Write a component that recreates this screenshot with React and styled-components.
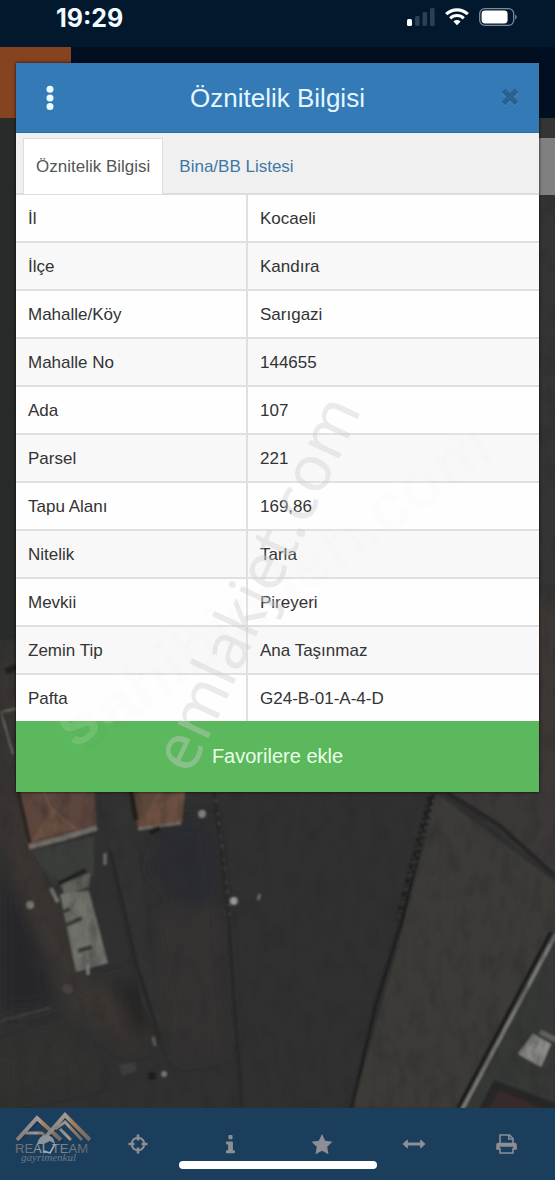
import React, { useState } from "react";
import styled, { createGlobalStyle } from "styled-components";

const GlobalStyle = createGlobalStyle`
    * {
        box-sizing: border-box;
    }

    body {
        margin: 0;
        background: #2d2d2d;
        font-family: "Liberation Sans", Arial, Helvetica, sans-serif;
        font-size: 17px;
        color: #333;
    }

    button {
        font-family: inherit;
        border: 0;
        padding: 0;
        cursor: pointer;
    }
`;

const Screen = styled.div`
    position: relative;
    display: flex;
    flex-direction: column;
    min-height: 100vh;
    overflow: hidden;
`;

const MapLayer = styled.svg`
    position: absolute;
    inset: 0;
    width: 100%;
    height: 100%;
`;

const StatusBar = styled.div`
    position: relative;
    display: flex;
    justify-content: space-between;
    height: 47px;
    padding: 8px 38px 0 56px;
    background: #02182d;
`;

const Clock = styled.time`
    font-family: Inter, "Liberation Sans", sans-serif;
    font-size: 25px;
    font-weight: 700;
    line-height: 20px;
    color: #f4fbff;
`;

const StatusIcons = styled.div`
    display: flex;
    gap: 10px;
    height: 18px;
`;

const Main = styled.main`
    position: relative;
    flex: 1;
    padding: 16px;
`;

const DimmedHeader = styled.div`
    position: absolute;
    top: 0;
    left: 0;
    right: 0;
    height: 71px;
    background: #010f20;
`;

const DimmedLogo = styled.div`
    width: 71px;
    height: 100%;
    background: #86431f;
`;

const DimmedPanel = styled.div`
    position: absolute;
    top: 91px;
    right: 0;
    width: 60px;
    height: 57px;
    background: #808080;
`;

const Dialog = styled.section`
    position: relative;
    background: #fff;
    box-shadow: 0 0 3px rgba(0, 0, 0, 0.8);
`;

const DialogHeader = styled.header`
    display: grid;
    grid-template-columns: 68px 1fr 68px;
    align-items: center;
    height: 70px;
    background: #337ab7;
    border-bottom: 1px solid #2e6da4;
`;

const DialogTitle = styled.h1`
    margin: 0;
    padding-top: 1px;
    font-size: 26px;
    font-weight: 400;
    text-align: center;
    white-space: nowrap;
    color: #e4f7ff;
`;

const HeaderButton = styled.button`
    display: flex;
    align-items: center;
    justify-content: center;
    height: 68px;
    padding-left: ${(props) => (props.$end ? "10px" : "0")};
    background: transparent;
`;

const Tabs = styled.div`
    display: flex;
    gap: 3px;
    height: 62px;
    padding: 5px 7px 0;
    background: #f0f0f0;
    border-bottom: 2px solid #ddd;
`;

const Tab = styled.button`
    height: 56px;
    padding: 0 12px;
    font-size: 17px;
    white-space: nowrap;
    color: ${(props) => (props.$active ? "#555" : "#3f77a5")};
    background: ${(props) => (props.$active ? "#fff" : "transparent")};
    border: 1px solid ${(props) => (props.$active ? "#ddd" : "transparent")};
    border-bottom: 0;
`;

const InfoTable = styled.table`
    width: 100%;
    border-spacing: 0;
    table-layout: fixed;
`;

const InfoRow = styled.tr`
    background: #fefefe;

    &:nth-child(even) {
        background: #f8f8f8;
    }

    & > * {
        height: 48px;
        padding: 2px 12px 0;
        font-weight: 400;
        text-align: left;
        border-bottom: 2px solid #e0e0e0;
    }

    &:last-child > * {
        height: 46px;
        border-bottom: 0;
    }
`;

const InfoLabel = styled.th`
    width: 232px;
    border-right: 2px solid #e0e0e0;
`;

const FavoriteButton = styled.button`
    display: block;
    width: 100%;
    height: 71px;
    font-size: 20px;
    color: #e9ffe9;
    background: #5cb85c;
`;

const Toolbar = styled.nav`
    position: relative;
    display: grid;
    grid-template-columns: repeat(6, 1fr);
    height: 72px;
    padding-right: 3px;
    background: #1b3e5d;
`;

const ToolButton = styled.button`
    display: flex;
    align-items: center;
    justify-content: center;
    color: #8d8f94;
    background: transparent;
`;

const HomeIndicator = styled.div`
    position: absolute;
    bottom: 11px;
    left: 50%;
    width: 198px;
    height: 8px;
    border-radius: 4px;
    background: #fff;
    transform: translateX(-50%);
`;

const Watermark = styled.svg`
    position: absolute;
    inset: 0;
    width: 100%;
    height: 100%;
    pointer-events: none;
`;

const rows = [
    ["İl", "Kocaeli"],
    ["İlçe", "Kandıra"],
    ["Mahalle/Köy", "Sarıgazi"],
    ["Mahalle No", "144655"],
    ["Ada", "107"],
    ["Parsel", "221"],
    ["Tapu Alanı", "169,86"],
    ["Nitelik", "Tarla"],
    ["Mevkii", "Pireyeri"],
    ["Zemin Tip", "Ana Taşınmaz"],
    ["Pafta", "G24-B-01-A-4-D"],
];

const tabs = ["Öznitelik Bilgisi", "Bina/BB Listesi"];

function SatelliteMap() {
    return (
        <MapLayer viewBox="0 0 555 1180" preserveAspectRatio="xMidYMid slice" aria-hidden="true">
            <defs>
                <filter id="soft" x="-5%" y="-5%" width="110%" height="110%">
                    <feGaussianBlur stdDeviation="1.2" />
                </filter>
                <filter id="haze" x="-20%" y="-20%" width="140%" height="140%">
                    <feGaussianBlur stdDeviation="8" />
                </filter>
                <filter id="grain" x="0" y="0" width="100%" height="100%">
                    <feTurbulence type="fractalNoise" baseFrequency="0.07 0.04" numOctaves="4" seed="4" />
                    <feColorMatrix values="0 0 0 0 0.02  0 0 0 0 0.02  0 0 0 0 0.02  0.9 0 0 0 -0.38" />
                </filter>
            </defs>
            <rect width="555" height="1180" fill="#303030" />
            <rect width="20" height="640" fill="#292b2b" />
            <rect x="535" width="20" height="620" fill="#343433" />
            <g filter="url(#haze)">
                <path d="M0 650h20v150l40 110 30 80 60-20 20 60-40 20-60-40L20 900 0 840z" fill="#3a3632" />
                <path d="M0 870l30 50 25 80-20 10H0z" fill="#25282b" />
                <path d="M170 820h40l10 80-30 10-40-40z" fill="#2a2b30" />
                <path d="M110 980h35l10 50-20 10z" fill="#252627" />
                <path d="M150 920l70-20 10 150-50 10z" fill="#343231" />
                <path d="M525 600h40v200h-40z" fill="#3c3734" />
                <path d="M0 1050l70-20 30 50-100 20z" fill="#30332f" />
            </g>
            <g filter="url(#soft)">
                <path d="M98 785h30l26 190 15 80-26-50z" fill="#323232" />
                <path d="M437 794l118 88v50l-93 176H353l50-180z" fill="#3d3b38" />
                <path d="M446 788h109v90z" fill="#3c3838" />
                <path d="M555 934v174h-90z" fill="#363836" />
                <path d="M446 792l54 34 55 50" fill="none" stroke="#272726" strokeWidth="5" />
                <path d="M551 932l-93 176" fill="none" stroke="#1d1d1c" strokeWidth="4" />
                <path d="M556 934l-94 176" fill="none" stroke="#80807e" strokeWidth="3" />
                <path d="M533 1034l18 10-10 23-23-13z" fill="#8c8c89" />
                <path d="M540 1032l16 8" stroke="#62645e" strokeWidth="5" />
                <path d="M494 1080l61 23v6h-76z" fill="#252527" />
                <path d="M499 1090l48 20h-60z" fill="#39292c" />
                <path d="M433 794l-31 126-26 84-25 106" fill="none" stroke="#1e1e1d" strokeWidth="3" />
                <path d="M434 800l-37 120" stroke="#464743" strokeWidth="3" strokeDasharray="2 5" />
                <path d="M430 797l-33 123" stroke="#1c1c1b" strokeWidth="4" strokeDasharray="5 3 2 4" />
                <path d="M214 790l14 120 6 90 8 108" fill="none" stroke="#252525" strokeWidth="3" />
                <path d="M215 790l15 125" stroke="#4c4c4b" strokeWidth="2" strokeDasharray="2 7 3 11" />
                <path d="M20 786h74l3 44-69 14z" fill="#5c443d" />
                <path d="M51 808l-20 34 46-14z" fill="#694f40" />
                <path d="M43 790l8 18 26 22" fill="none" stroke="#786259" />
                <path d="M18 790l12 53" stroke="#28221f" strokeWidth="3" />
                <path d="M29 847l35-9 33-10" fill="none" stroke="#74706b" strokeWidth="5" />
                <path d="M132 786h54l-4 36-44 7z" fill="#5d463b" />
                <path d="M159 792l-21 35 44-6 3-30z" fill="#6c503f" />
                <path d="M131 790l5 30" stroke="#221c19" strokeWidth="5" />
                <path d="M138 829l43-6" stroke="#796e65" strokeWidth="3" />
                <path d="M150 832l10-4" stroke="#18191b" strokeWidth="5" />
                <path d="M32 851l62-15v40l-41 10z" fill="#3b3d3a" />
                <path d="M60 885l30-12-1 14-24 8z" fill="#60625c" />
                <path d="M58 884l28-14" stroke="#1c1e1d" strokeWidth="4" />
                <path d="M60 894l29-4 19 73-32 9-8-38z" fill="#6f716b" />
                <path d="M66 925l16-7M78 951l14-4M60 913l10-4" stroke="#343632" strokeWidth="4" />
                <path d="M51 888l7 14" stroke="#777970" strokeWidth="4" />
                <path d="M88 964v11" stroke="#9c9c95" strokeWidth="3" />
                <circle cx="30" cy="905" r="4" fill="#7a7b75" />
                <circle cx="202" cy="814" r="4" fill="#82827e" />
                <circle cx="234" cy="901" r="4" fill="#999" />
                <circle cx="68" cy="989" r="5" fill="#504c48" />
                <circle cx="164" cy="1074" r="3" fill="#787873" />
                <circle cx="152" cy="1076" r="4" fill="#1b1c1d" />
                <path d="M119 1065l16-3 2 8-15 6z" fill="#3f3e3b" />
                <path d="M105 853v12M258 900l2-6M153 1037l2 9" stroke="#6d6d67" strokeWidth="3" />
                <path d="M0 1021l50-13" stroke="#42443d" strokeWidth="2" />
                <path d="M1 712l12 42M1 712l18-4" stroke="#6c6a66" strokeWidth="2" />
                <path d="M6 671l14-5" stroke="#1a1a1a" strokeWidth="6" />
                <path d="M110 850l25 110 25 80" fill="none" stroke="#292827" strokeWidth="4" />
            </g>
            <rect width="555" height="1180" filter="url(#grain)" />
        </MapLayer>
    );
}

function SignalIcon() {
    return (
        <svg width="28" height="18" viewBox="0 0 28 18" aria-hidden="true">
            <rect y="11" width="5" height="7" rx="1.5" fill="#fff" />
            <g fill="#2b4052">
                <rect x="8" y="8" width="4.6" height="10" rx="1.5" />
                <rect x="15.5" y="4" width="4.6" height="14" rx="1.5" />
                <rect x="23" width="4.6" height="18" rx="1.5" />
            </g>
        </svg>
    );
}

function WifiIcon() {
    return (
        <svg width="24" height="18" viewBox="0 0 24 18" fill="none" stroke="#fff" aria-hidden="true">
            <path d="M1.2 6.2a15.5 15.5 0 0 1 21.6 0" strokeWidth="3.2" />
            <path d="M5.2 10.4a9.7 9.7 0 0 1 13.6 0" strokeWidth="3" />
            <path d="M8.4 13.5a5.2 5.2 0 0 1 7.2 0L12 17.2z" fill="#fff" stroke="none" />
        </svg>
    );
}

function BatteryIcon() {
    return (
        <svg width="38" height="18" viewBox="0 0 38 18" aria-hidden="true">
            <rect x="0.7" y="0.7" width="34" height="16.6" rx="5" fill="none" stroke="#7d8b97" strokeWidth="1.3" />
            <rect x="2.6" y="2.5" width="26" height="13" rx="3.4" fill="#fff" />
            <path d="M36.2 6.4q1.6 1 1.6 2.6t-1.6 2.6z" fill="#7d8b97" />
        </svg>
    );
}

function DotsIcon() {
    return (
        <svg width="8" height="26" viewBox="0 0 8 26" fill="#e9fbff" aria-hidden="true">
            <circle cx="4" cy="4.2" r="3.5" />
            <circle cx="4" cy="13" r="3.5" />
            <circle cx="4" cy="21.6" r="3.5" />
        </svg>
    );
}

function CloseIcon() {
    return (
        <svg width="18" height="19" viewBox="0 0 18 19" fill="none" strokeWidth="5.4" aria-hidden="true">
            <path d="M2.4 3.4l13.2 13.2M15.6 3.4L2.4 16.6" stroke="#5790bf" />
            <path d="M2.4 2.4l13.2 13.2M15.6 2.4L2.4 15.6" stroke="#29628f" />
        </svg>
    );
}

function CrosshairIcon() {
    return (
        <svg width="20" height="20" viewBox="0 0 20 20" fill="none" stroke="currentColor" aria-hidden="true">
            <circle cx="10" cy="10" r="6.3" strokeWidth="2" />
            <path d="M10 .5v6M10 13.5v6M.5 10h6M13.5 10h6" strokeWidth="2.6" />
        </svg>
    );
}

function InfoIcon() {
    return (
        <svg width="9" height="19" viewBox="0 0 9 19" fill="currentColor" aria-hidden="true">
            <path d="M2.5.8q0-.8.8-.8h2.4q.8 0 .8.8v2.7q0 .8-.8.8H3.3q-.8 0-.8-.8zM.5 6.6h5.6q.8 0 .8.8v7.8h1.3q.7 0 .7.7v1.7q0 .7-.7.7H.8q-.8 0-.8-.7v-1.7q0-.7.8-.7h1.3V9.4H.8Q0 9.4 0 8.7V7.2q0-.6.5-.6z" />
        </svg>
    );
}

function StarIcon() {
    return (
        <svg width="22" height="21" viewBox="0 0 22 21" fill="currentColor" aria-hidden="true">
            <path d="M11 0l3.2 6.7 7.3 1-5.3 5.1 1.3 7.4L11 16.7l-6.5 3.5 1.3-7.4L.5 7.7l7.3-1z" />
        </svg>
    );
}

function ArrowsIcon() {
    return (
        <svg width="24" height="10" viewBox="0 0 24 10" fill="currentColor" aria-hidden="true">
            <path d="M.5 5L5 .8q.9-.5.9.5v2.3h12.2V1.3q0-1 .9-.5L23.5 5 19 9.2q-.9.5-.9-.5V6.4H5.9v2.3q0 1-.9.5z" />
        </svg>
    );
}

function PrintIcon() {
    return (
        <svg width="21" height="20" viewBox="0 0 21 20" fill="none" stroke="currentColor" strokeWidth="1.6" aria-hidden="true">
            <path d="M4 10V1h9.5L17 4.5V10" />
            <path d="M12.8 1v4H17" />
            <path d="M.2 15.2V11q0-2.2 2.2-2.2h16.2q2.2 0 2.2 2.2v4.2q0 .6-.6.6h-2.8v-3H3.8v3H.8q-.6 0-.6-.6z" fill="currentColor" stroke="none" />
            <path d="M4 14v5h13v-5" />
        </svg>
    );
}

function RealTeamLogo() {
    return (
        <svg width="92" height="70" viewBox="-13 0 92 70" aria-hidden="true">
            <defs>
                <linearGradient id="roof" x1="0" x2="1">
                    <stop offset="0" stopColor="#817d7b" />
                    <stop offset="0.5" stopColor="#a29b96" />
                    <stop offset="0.62" stopColor="#a27e5b" />
                    <stop offset="1" stopColor="#6c6867" />
                </linearGradient>
                <linearGradient id="wordmark" x1="0" x2="1">
                    <stop offset="0.2" stopColor="#707074" />
                    <stop offset="0.35" stopColor="#a0a6aa" />
                    <stop offset="0.5" stopColor="#8b8f93" />
                    <stop offset="1" stopColor="#66666a" />
                </linearGradient>
            </defs>
            <g fill="none" stroke="#162c41" strokeWidth="4" opacity="0.5">
                <path d="M5 33L25 11l25 22M31 33L53 7l25 25" />
            </g>
            <g fill="none" stroke="url(#roof)" strokeWidth="4">
                <path d="M4 31L24 9l24 22" />
                <path d="M30 31L52 6l25 25" />
                <path d="M12 24h17l6 6" strokeWidth="3" />
                <path d="M42 20l10-7 17 18M47 20l11 11" strokeWidth="3" />
            </g>
            <path d="M24 35q2-9 10-9 7 1 8 9l-5-3-6 3z" fill="#8e9599" />
            <text x="2" y="44" fontFamily="Liberation Sans, sans-serif" fontSize="13" fontWeight="400" fill="url(#wordmark)">
                REAL TEAM
            </text>
            <path d="M31 42l6 2 5-9" fill="none" stroke="#a4abb0" strokeWidth="1.6" />
            <text x="8" y="52" fontFamily="Liberation Serif, serif" fontStyle="italic" fontSize="11" fill="#6c7a87">
                gayrimenkul
            </text>
        </svg>
    );
}

const tools = [
    { label: "Real Team", Icon: RealTeamLogo },
    { label: "Konum", Icon: CrosshairIcon },
    { label: "Bilgi", Icon: InfoIcon },
    { label: "Favoriler", Icon: StarIcon },
    { label: "Ölçüm", Icon: ArrowsIcon },
    { label: "Yazdır", Icon: PrintIcon },
];

export default function App() {
    const [activeTab, setActiveTab] = useState(0);

    return (
        <Screen>
            <GlobalStyle />
            <SatelliteMap />
            <StatusBar>
                <Clock>19:29</Clock>
                <StatusIcons>
                    <SignalIcon />
                    <WifiIcon />
                    <BatteryIcon />
                </StatusIcons>
            </StatusBar>
            <Main>
                <DimmedHeader>
                    <DimmedLogo />
                </DimmedHeader>
                <DimmedPanel />
                <Dialog role="dialog" aria-labelledby="dialog-title">
                    <DialogHeader>
                        <HeaderButton aria-label="Menü">
                            <DotsIcon />
                        </HeaderButton>
                        <DialogTitle id="dialog-title">Öznitelik Bilgisi</DialogTitle>
                        <HeaderButton $end aria-label="Kapat">
                            <CloseIcon />
                        </HeaderButton>
                    </DialogHeader>
                    <Tabs role="tablist">
                        {tabs.map((tab, i) => (
                            <Tab
                                key={tab}
                                role="tab"
                                aria-selected={activeTab === i}
                                $active={activeTab === i}
                                onClick={() => setActiveTab(i)}
                            >
                                {tab}
                            </Tab>
                        ))}
                    </Tabs>
                    <InfoTable>
                        <tbody>
                            {rows.map(([label, value]) => (
                                <InfoRow key={label}>
                                    <InfoLabel scope="row">{label}</InfoLabel>
                                    <td>{value}</td>
                                </InfoRow>
                            ))}
                        </tbody>
                    </InfoTable>
                    <FavoriteButton>Favorilere ekle</FavoriteButton>
                </Dialog>
            </Main>
            <Toolbar>
                {tools.map(({ label, Icon }) => (
                    <ToolButton key={label} aria-label={label}>
                        <Icon />
                    </ToolButton>
                ))}
                <HomeIndicator />
            </Toolbar>
            <Watermark viewBox="0 0 555 1180" preserveAspectRatio="xMidYMid slice" aria-hidden="true">
                <g fontFamily="Liberation Sans, sans-serif" fontWeight="700" fontSize="67">
                    <text transform="translate(84 756) rotate(-36)" fill="#000" fillOpacity="0.008">
                        sahibinden.com
                    </text>
                    <text transform="translate(74 750) rotate(-36)" fill="#fff" fillOpacity="0.12">
                        sahibinden.com
                    </text>
                </g>
                <text
                    transform="translate(191 776) rotate(-65)"
                    fontFamily="Noto Sans, sans-serif"
                    fontSize="64"
                    fill="#ccc"
                    fillOpacity="0.4"
                >
                    emlakjet.com
                </text>
            </Watermark>
        </Screen>
    );
}
